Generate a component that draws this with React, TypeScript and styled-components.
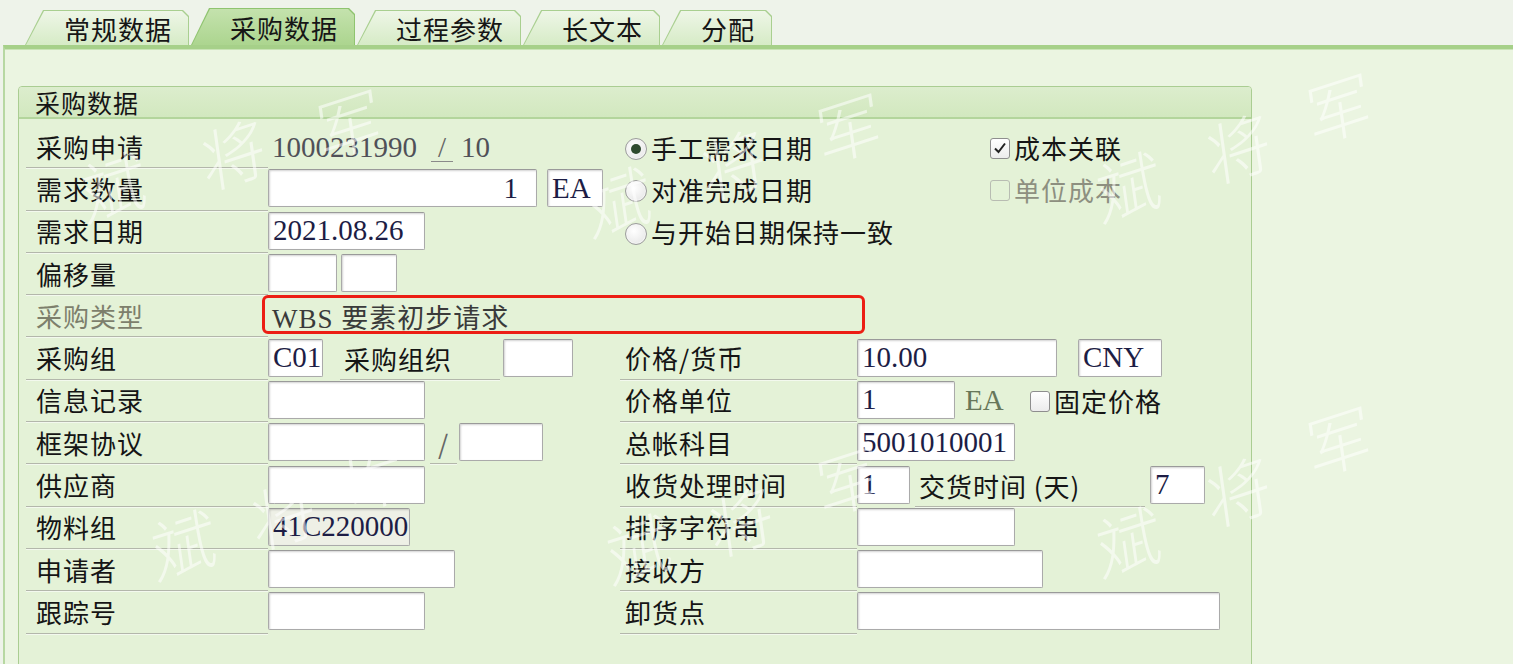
import React from "react";
import styled, { createGlobalStyle, css } from "styled-components";

const GlobalStyle = createGlobalStyle`
  html, body {
    margin: 0;
    padding: 0;
    background: #eef3ea;
  }
  body {
    font-family: "Noto Sans CJK SC", "Noto Sans", sans-serif;
    color: #141414;
  }
`;

const tabs = [
  { label: "常规数据", active: false },
  { label: "采购数据", active: true },
  { label: "过程参数", active: false },
  { label: "长文本", active: false },
  { label: "分配", active: false },
];

const marks = [
  { ch: "斌", x: 80, y: 150 },
  { ch: "将", x: 200, y: 118 },
  { ch: "军", x: 315, y: 88 },
  { ch: "斌", x: 585, y: 165 },
  { ch: "将", x: 700, y: 128 },
  { ch: "军", x: 815, y: 92 },
  { ch: "斌", x: 1095, y: 150 },
  { ch: "将", x: 1205, y: 112 },
  { ch: "军", x: 1305, y: 72 },
  { ch: "斌", x: 150, y: 508 },
  { ch: "将", x: 250, y: 478 },
  { ch: "军", x: 345, y: 440 },
  { ch: "斌", x: 605, y: 512 },
  { ch: "将", x: 708, y: 485 },
  { ch: "军", x: 815, y: 445 },
  { ch: "斌", x: 1095, y: 505 },
  { ch: "将", x: 1205, y: 455 },
  { ch: "军", x: 1305, y: 405 },
];

export default function App() {
  return (
    <Page>
      <GlobalStyle />
      <TabStrip>
        {tabs.map((t) => (
          <Tab key={t.label} $active={t.active}>
            <TabFace $active={t.active}>{t.label}</TabFace>
          </Tab>
        ))}
      </TabStrip>

      <Panel>
        <Group>
          <GroupHeader>采购数据</GroupHeader>
          <GroupBody>
            <Row>
              <Side>
                <Label>采购申请</Label>
                <DisplayText>
                  1000231990<Slash>/</Slash>10
                </DisplayText>
              </Side>
              <Side $right>
                <Option $w={365}>
                  <Radio $on />
                  手工需求日期
                </Option>
                <Option>
                  <Check $on>
                    <svg width="14" height="14" viewBox="0 0 14 14">
                      <path d="M2 7.5 L5.5 11 L12 2.5" fill="none" stroke="#222" strokeWidth="2" />
                    </svg>
                  </Check>
                  成本关联
                </Option>
              </Side>
            </Row>

            <Row>
              <Side>
                <Label>需求数量</Label>
                <Field $w={269} $alignRight>1</Field>
                <Field $w={56} $gap={10}>EA</Field>
              </Side>
              <Side $right>
                <Option $w={365}>
                  <Radio />
                  对准完成日期
                </Option>
                <Option $disabled>
                  <Check $disabled />
                  单位成本
                </Option>
              </Side>
            </Row>

            <Row>
              <Side>
                <Label>需求日期</Label>
                <Field $w={157}>2021.08.26</Field>
              </Side>
              <Side $right>
                <Option>
                  <Radio />
                  与开始日期保持一致
                </Option>
              </Side>
            </Row>

            <Row>
              <Side>
                <Label>偏移量</Label>
                <Field $w={69} />
                <Field $w={56} $gap={4} />
              </Side>
            </Row>

            <Row>
              <Side>
                <Label $disabled>采购类型</Label>
                <TypeText>WBS 要素初步请求</TypeText>
              </Side>
              <Highlight />
            </Row>

            <Row>
              <Side>
                <Label>采购组</Label>
                <Field $w={55}>C01</Field>
                <SubLabel $w={160} $gap={17}>采购组织</SubLabel>
                <Field $w={70} $gap={3} />
              </Side>
              <Side $right>
                <Label $right>价格/货币</Label>
                <Field $w={200}>10.00</Field>
                <Field $w={84} $gap={21}>CNY</Field>
              </Side>
            </Row>

            <Row>
              <Side>
                <Label>信息记录</Label>
                <Field $w={157} />
              </Side>
              <Side $right>
                <Label $right>价格单位</Label>
                <Field $w={98}>1</Field>
                <UnitText>EA</UnitText>
                <Option>
                  <Check />
                  固定价格
                </Option>
              </Side>
            </Row>

            <Row>
              <Side>
                <Label>框架协议</Label>
                <Field $w={157} />
                <SubLabel $w={27} $gap={5} $center>/</SubLabel>
                <Field $w={84} $gap={2} />
              </Side>
              <Side $right>
                <Label $right>总帐科目</Label>
                <Field $w={158}>5001010001</Field>
              </Side>
            </Row>

            <Row>
              <Side>
                <Label>供应商</Label>
                <Field $w={157} />
              </Side>
              <Side $right>
                <Label $right>收货处理时间</Label>
                <Field $w={53}>1</Field>
                <SubLabel $w={230} $gap={5}>交货时间 (天)</SubLabel>
                <Field $w={55} $gap={5}>7</Field>
              </Side>
            </Row>

            <Row>
              <Side>
                <Label>物料组</Label>
                <Field $w={142} $readOnly>41C220000</Field>
              </Side>
              <Side $right>
                <Label $right>排序字符串</Label>
                <Field $w={158} />
              </Side>
            </Row>

            <Row>
              <Side>
                <Label>申请者</Label>
                <Field $w={187} />
              </Side>
              <Side $right>
                <Label $right>接收方</Label>
                <Field $w={186} />
              </Side>
            </Row>

            <Row>
              <Side>
                <Label>跟踪号</Label>
                <Field $w={157} />
              </Side>
              <Side $right>
                <Label $right>卸货点</Label>
                <Field $w={363} />
              </Side>
            </Row>
          </GroupBody>
        </Group>
      </Panel>

      <Watermark>
        {marks.map((m, i) => (
          <Mark key={i} style={{ left: m.x, top: m.y }}>
            {m.ch}
          </Mark>
        ))}
      </Watermark>
    </Page>
  );
}

const Page = styled.div`
  position: relative;
  width: 1513px;
  height: 664px;
  overflow: hidden;
`;

const TabStrip = styled.div`
  display: flex;
  align-items: flex-end;
  gap: 2px;
  height: 45px;
  padding-left: 25px;
  box-sizing: border-box;
`;

const tabShape = css`
  clip-path: polygon(0 100%, 18px 0, calc(100% - 6px) 0, 100% 6px, 100% 100%);
`;

const Tab = styled.div<{ $active?: boolean }>`
  ${tabShape};
  height: ${(p) => (p.$active ? 37 : 35)}px;
  padding: 1px 1px 0 1px;
  box-sizing: border-box;
  background: ${(p) => (p.$active ? "#8fc46f" : "#a9cf90")};
`;

const TabFace = styled.div<{ $active?: boolean }>`
  ${tabShape};
  height: 100%;
  display: flex;
  align-items: center;
  padding: 1px 16px 0 38px;
  box-sizing: border-box;
  font-size: 26px;
  letter-spacing: 1px;
  color: #161616;
  background: ${(p) =>
    p.$active
      ? "linear-gradient(#c4e2ad, #acd58f)"
      : "linear-gradient(#eef6e7, #d6ebc6)"};
`;

const Panel = styled.div`
  margin-left: 3px;
  height: 619px;
  border-top: 4px solid #a6d089;
  border-left: 2px solid #b7d8a2;
  box-shadow: inset 0 1px 0 #c9e4b6;
  background: #ebf5e1;
  padding: 37px 0 0 13px;
  box-sizing: border-box;
`;

const Group = styled.div`
  width: 1234px;
  height: 600px;
  border: 1px solid #aacd92;
  border-radius: 4px 4px 0 0;
  background: #e4f2d7;
  box-sizing: border-box;
`;

const GroupHeader = styled.div`
  height: 30px;
  display: flex;
  align-items: center;
  padding-left: 16px;
  font-size: 25px;
  letter-spacing: 1px;
  color: #161616;
  background: linear-gradient(#dcedcd, #d2e8bf);
  border-bottom: 2px solid #b3d59c;
  border-radius: 3px 3px 0 0;
`;

const GroupBody = styled.div`
  padding: 7px 0 0 7px;
`;

const Row = styled.div`
  position: relative;
  display: flex;
  height: 42.3px;
`;

const Side = styled.div<{ $right?: boolean }>`
  display: flex;
  align-items: center;
  width: ${(p) => (p.$right ? "auto" : "594px")};
  flex: ${(p) => (p.$right ? "1" : "none")};
  height: 100%;
`;

const underline = css`
  border-bottom: 1px solid #b3b7ab;
  box-shadow: 0 1px 0 #f3f9ee;
`;

const Label = styled.div<{ $right?: boolean; $disabled?: boolean }>`
  ${underline};
  align-self: stretch;
  display: flex;
  align-items: center;
  width: ${(p) => (p.$right ? 237 : 242)}px;
  padding-left: ${(p) => (p.$right ? 5 : 10)}px;
  padding-bottom: 1px;
  box-sizing: border-box;
  font-size: 26px;
  letter-spacing: 1px;
  color: ${(p) => (p.$disabled ? "#7d7f6c" : "#151515")};
  flex: none;
`;

const SubLabel = styled.div<{ $w: number; $gap?: number; $center?: boolean }>`
  ${underline};
  align-self: stretch;
  display: flex;
  align-items: center;
  justify-content: ${(p) => (p.$center ? "center" : "flex-start")};
  width: ${(p) => p.$w}px;
  margin-left: ${(p) => p.$gap ?? 0}px;
  padding-left: ${(p) => (p.$center ? 0 : 4)}px;
  box-sizing: border-box;
  font-size: 26px;
  letter-spacing: 1px;
  color: ${(p) => (p.$center ? "#666" : "#151515")};
  flex: none;
`;

const valueFont = css`
  font-family: "Liberation Serif", "Noto Sans CJK SC", serif;
  font-size: 29px;
`;

const Field = styled.div<{
  $w: number;
  $gap?: number;
  $alignRight?: boolean;
  $readOnly?: boolean;
}>`
  ${valueFont};
  width: ${(p) => p.$w}px;
  height: 38px;
  margin-left: ${(p) => p.$gap ?? 0}px;
  margin-top: -2px;
  display: flex;
  align-items: center;
  justify-content: ${(p) => (p.$alignRight ? "flex-end" : "flex-start")};
  padding: 0 ${(p) => (p.$alignRight ? 18 : 4)}px 0 4px;
  box-sizing: border-box;
  background: ${(p) => (p.$readOnly ? "#eef0e6" : "#ffffff")};
  border: 1px solid #aaaaaa;
  border-top-color: #9a9a9a;
  box-shadow: inset 1px 1px 2px rgba(0, 0, 0, 0.18);
  border-radius: 2px;
  color: #1d1d45;
  flex: none;
  white-space: nowrap;
  overflow: hidden;
`;

const DisplayText = styled.div`
  ${valueFont};
  padding-left: 4px;
  color: #505058;
  display: flex;
  align-items: center;
`;

const Slash = styled.span`
  display: inline-block;
  margin: 0 8px 0 14px;
  padding: 0 7px;
  line-height: 28px;
  border-bottom: 1px solid #8a8a8a;
  color: #666;
`;

const TypeText = styled.div`
  ${valueFont};
  font-size: 27px;
  padding-left: 4px;
  color: #3a3a3a;
  letter-spacing: 1px;
`;

const UnitText = styled.div`
  ${valueFont};
  width: 70px;
  padding-left: 10px;
  box-sizing: border-box;
  color: #67775a;
  flex: none;
`;

const Highlight = styled.div`
  position: absolute;
  left: 236px;
  top: 0;
  width: 603px;
  height: 39px;
  border: 3px solid #ec1e14;
  border-radius: 6px;
  box-sizing: border-box;
  pointer-events: none;
`;

const Option = styled.div<{ $w?: number; $disabled?: boolean }>`
  display: flex;
  align-items: center;
  gap: 4px;
  width: ${(p) => (p.$w ? `${p.$w}px` : "auto")};
  padding-left: 5px;
  box-sizing: border-box;
  font-size: 26px;
  letter-spacing: 1px;
  color: ${(p) => (p.$disabled ? "#8d8f80" : "#151515")};
  flex: none;
`;

const Radio = styled.span<{ $on?: boolean }>`
  position: relative;
  width: 20px;
  height: 20px;
  border-radius: 50%;
  border: 1px solid #9c9c9c;
  background: radial-gradient(circle at 40% 35%, #ffffff, #e2e2e2);
  box-shadow: inset 0 0 0 1px #f4f4f4;
  flex: none;
  margin-top: 4px;

  &::after {
    content: "";
    display: ${(p) => (p.$on ? "block" : "none")};
    position: absolute;
    left: 5px;
    top: 5px;
    width: 10px;
    height: 10px;
    border-radius: 50%;
    background: #2e4a2e;
  }
`;

const Check = styled.span<{ $on?: boolean; $disabled?: boolean }>`
  display: flex;
  align-items: center;
  justify-content: center;
  width: 20px;
  height: 21px;
  border-radius: 3px;
  border: 1px solid ${(p) => (p.$disabled ? "#b8bcb2" : "#8e8e8e")};
  background: ${(p) => (p.$disabled ? "transparent" : "linear-gradient(#ffffff, #ececec)")};
  box-sizing: border-box;
  flex: none;
  margin-top: 2px;
`;

const Watermark = styled.div`
  position: absolute;
  inset: 0;
  pointer-events: none;
`;

const Mark = styled.span`
  position: absolute;
  font-family: "Noto Sans CJK SC", sans-serif;
  font-weight: 300;
  font-size: 66px;
  line-height: 1;
  color: rgba(255, 255, 255, 0.55);
  transform: rotate(-18deg) skewX(-10deg);
`;
